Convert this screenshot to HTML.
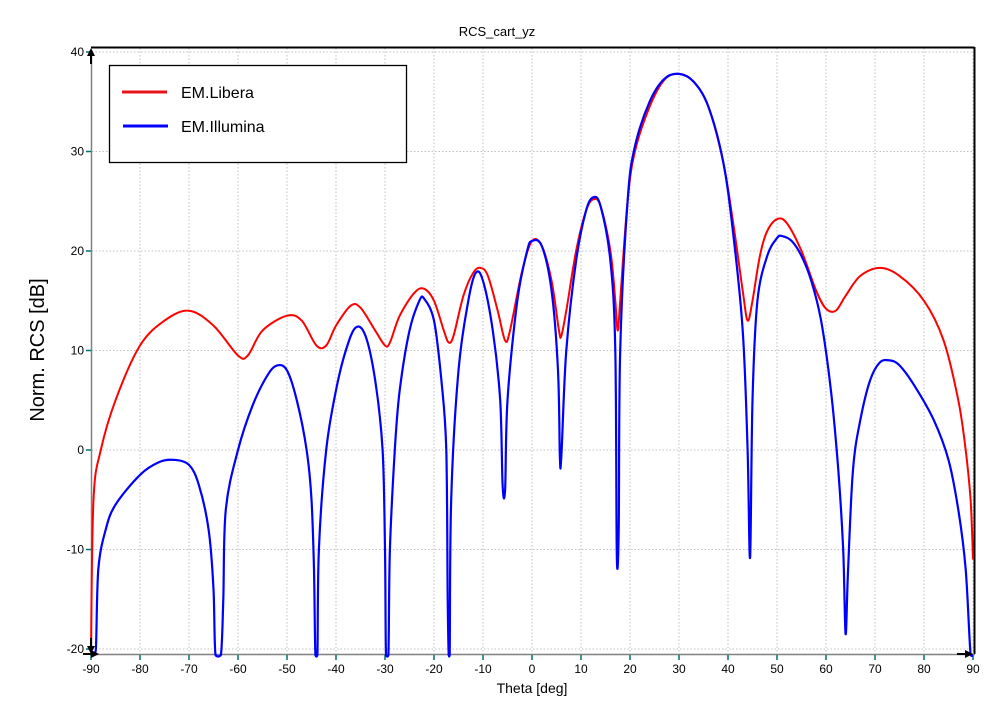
<!DOCTYPE html>
<html><head><meta charset="utf-8"><style>
html,body{margin:0;padding:0;background:#fff;width:999px;height:725px;overflow:hidden}
svg{display:block;font-family:"Liberation Sans",sans-serif}
</style></head><body>
<svg id="s" width="999" height="725" viewBox="0 0 999 725" xmlns="http://www.w3.org/2000/svg">
<text x="497" y="36" font-size="13" text-anchor="middle">RCS_cart_yz</text>
<g id="grid" stroke="#c0c0c0" stroke-dasharray="1.5,2" stroke-width="1"></g>
<line x1="91" y1="47.5" x2="974.5" y2="47.5" stroke="#000" stroke-width="2"/>
<line x1="974.5" y1="47" x2="974.5" y2="654" stroke="#000" stroke-width="2"/>
<line x1="91.5" y1="50" x2="91.5" y2="654" stroke="#808080" stroke-width="1.5"/>
<line x1="91" y1="654.5" x2="975" y2="654.5" stroke="#808080" stroke-width="1.5"/>
<g id="ticks" stroke="#007070" stroke-width="1.5"></g>
<g id="labels" font-size="12"></g>
<path id="red" fill="none" stroke="#ff0000" stroke-width="2" stroke-linejoin="round"/>
<path id="blue" fill="none" stroke="#0000ff" stroke-width="2.2" stroke-linejoin="round"/>
<rect x="109.5" y="65.5" width="297" height="97" fill="#fff" stroke="#000" stroke-width="1.3"/>
<line x1="122" y1="92" x2="167" y2="92" stroke="#e8141c" stroke-width="3"/>
<line x1="123" y1="126" x2="168" y2="126" stroke="#0000ff" stroke-width="3"/>
<text x="181" y="98" font-size="16">EM.Libera</text>
<text x="181" y="132" font-size="16">EM.Illumina</text>
<text x="0" y="0" font-size="20" text-anchor="middle" transform="translate(44,350) rotate(-90)">Norm. RCS [dB]</text>
<text x="532" y="693" font-size="14" text-anchor="middle">Theta [deg]</text>
<path d="M91 48 l-4 8 h3 v8 h2 v-8 h3z" fill="#000"/>
<path d="M91 654 l-4 -8 h3 v-8 h2 v8 h3z" fill="#000"/>
<path d="M99 654 l-8 -4 v3 h-8 v2 h8 v3z" fill="#000"/>
<path d="M973 654 l-8 -4 v3 h-8 v2 h8 v3z" fill="#000"/>
</svg>
<script>
var X=function(d){return 91+(d+90)*4.9},Y=function(v){return 52+(40-v)*9.95};
var ns="http://www.w3.org/2000/svg",g=document.getElementById('grid'),t=document.getElementById('ticks'),l=document.getElementById('labels');
function el(p,tag,a,txt){var e=document.createElementNS(ns,tag);for(var k in a)e.setAttribute(k,a[k]);if(txt)e.textContent=txt;p.appendChild(e);}
for(var d=-80;d<=90;d+=10){el(g,'line',{x1:X(d),y1:48,x2:X(d),y2:654});}
for(var v=-20;v<=40;v+=10){el(g,'line',{x1:92,y1:Y(v),x2:974,y2:Y(v)});}
for(var d=-90;d<=90;d+=10){el(t,'line',{x1:X(d),y1:655,x2:X(d),y2:660});el(l,'text',{x:X(d),y:673,'text-anchor':'middle'},String(d));}
for(var v=-20;v<=40;v+=10){el(t,'line',{x1:86,y1:Y(v),x2:91,y2:Y(v)});el(l,'text',{x:84,y:Y(v)+4,'text-anchor':'end'},String(v));}
var R=[[-90,-20],[-89.5,-5],[-88,0],[-85,5],[-80,10.5],[-75,13],[-70,14],[-65,12.5],[-60,9.5],[-58,9.5],[-55,12],[-50,13.5],[-47,13],[-44,10.5],[-42,10.5],[-40,12.5],[-37,14.5],[-35,14.3],[-32,12],[-30,10.5],[-29,10.8],[-27,13.5],[-24,15.8],[-22,16.2],[-20,15],[-18,12],[-17,10.8],[-16,11.5],[-14,15.5],[-12,17.8],[-10.5,18.3],[-9,17.5],[-7,14],[-5.5,11],[-4.5,12],[-2,18],[0,21],[2,20.5],[4,17],[5.5,12],[6,11.5],[7,14],[9,20],[11,24],[12.5,25.2],[14,24.5],[16,20],[17,15],[17.5,12],[18,15],[19.5,25],[21,30],[24,34.5],[27,37.2],[30,37.8],[33,37],[36,34.5],[39,29],[41,23],[43,16],[44,13],[45,15],[46.5,19.5],[48,22],[50,23.2],[52,22.8],[55,20],[58,16],[60,14.2],[62,14],[64,15.5],[67,17.5],[71,18.3],[75,17.5],[80,15],[84,11],[87,5],[88.5,0],[89.5,-5],[90,-11]];
var B=[[-89.5,-20.5],[-89,-20],[-88.5,-12],[-87,-8],[-85,-5.5],[-80,-2.5],[-76,-1.2],[-73,-1],[-70,-1.5],[-68,-3.5],[-66,-8],[-65,-14],[-64.6,-20.6],[-63.5,-20.6],[-63,-15],[-62.5,-6],[-60,0],[-57,4.5],[-54,7.5],[-52,8.5],[-50,8],[-48,5],[-46,0],[-45,-5],[-44.5,-12],[-44.2,-20.6],[-43.8,-20.6],[-43.5,-10],[-42,0],[-40,6],[-38,10],[-36,12.3],[-34,11.5],[-32,7],[-30.5,0],[-30,-10],[-29.8,-20.6],[-29.3,-20.6],[-29,-10],[-28,0],[-27,6],[-25,12],[-23,15],[-22,15.2],[-20,13],[-18.5,7],[-17.5,0],[-17.2,-15],[-17,-20.6],[-16.8,-20.6],[-16.5,-5],[-15,8],[-13,15],[-11.5,17.8],[-10,17],[-8,12],[-6.5,5],[-6,-3.5],[-5.5,-4],[-5,5],[-3,15],[-1,20],[0,21],[2,20.5],[4,16],[5.3,8],[5.7,-0.8],[6,-0.5],[7,10],[9,19],[11,24],[12.5,25.4],[14,24.5],[16,19],[17,10],[17.3,-10.5],[17.7,-8],[18,10],[19.5,25],[21,30.5],[24,35],[27,37.3],[30,37.8],[33,37],[36,34.5],[39,29],[41,22],[43,12],[44,0],[44.5,-10.8],[45,5],[46,15],[48,19.5],[50,21.3],[51,21.5],[53,21],[55,19.5],[57,17],[59,13],[61,6],[62.5,-2],[63.5,-10],[64,-18.5],[64.5,-12],[65.5,-2],[67,3],[69,7],[71,8.8],[73,9],[75,8.5],[78,6.5],[82,3],[85,-1],[87,-6],[88.5,-12],[89.5,-20.6],[90,-20.6]];
function P(a){
  var q=a.map(function(p){return[X(p[0]),Y(p[1])]});
  var s='M'+q[0][0].toFixed(1)+' '+q[0][1].toFixed(1);
  for(var i=0;i<q.length-1;i++){
    var p0=q[i>0?i-1:i],p1=q[i],p2=q[i+1],p3=q[i+2<q.length?i+2:i+1];
    var k=1/6;
    var c1=[p1[0]+(p2[0]-p0[0])*k,p1[1]+(p2[1]-p0[1])*k];
    var c2=[p2[0]-(p3[0]-p1[0])*k,p2[1]-(p3[1]-p1[1])*k];
    c1[1]=Math.min(Math.max(c1[1],50),657);c2[1]=Math.min(Math.max(c2[1],50),657);
    s+=' C'+c1[0].toFixed(1)+' '+c1[1].toFixed(1)+' '+c2[0].toFixed(1)+' '+c2[1].toFixed(1)+' '+p2[0].toFixed(1)+' '+p2[1].toFixed(1);
  }
  return s;
}
document.getElementById('red').setAttribute('d',P(R));
document.getElementById('blue').setAttribute('d',P(B));
</script>
</body></html>
